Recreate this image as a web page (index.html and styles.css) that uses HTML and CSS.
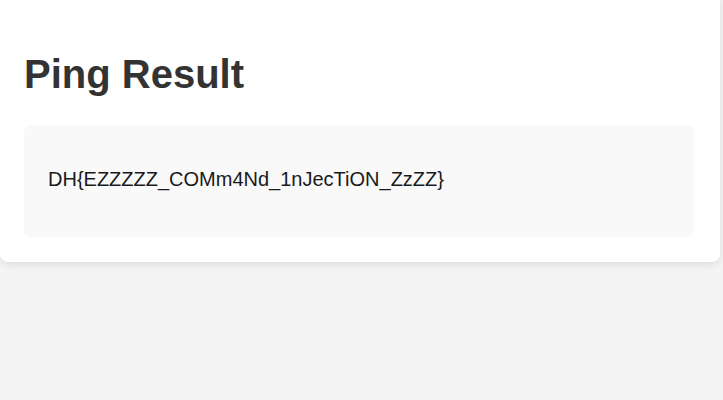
FILE: index.html
```html
<!DOCTYPE html>
<html lang="en">
<head>
<meta charset="utf-8">
<title>Ping Result</title>
<link rel="stylesheet" href="styles.css">
</head>
<body>
<main class="card">
  <h1 class="title">Ping Result</h1>
  <div class="result">
    <p class="output">DH{EZZZZZ_COMm4Nd_1nJecTiON_ZzZZ}</p>
  </div>
</main>
</body>
</html>
```

FILE: styles.css
```css
html, body {
  margin: 0;
  padding: 0;
}
body {
  background: #f4f4f4;
  font-family: "Liberation Sans", Arial, sans-serif;
  width: 723px;
  height: 400px;
  overflow: hidden;
}
.card {
  display: block;
  box-sizing: border-box;
  width: 720px;
  background: #ffffff;
  border-radius: 0 0 8px 8px;
  box-shadow: 0 2px 8px rgba(0, 0, 0, 0.1);
  padding: 24px 26px 25px 24px;
}
.title {
  margin: 27px 0 28px;
  font-size: 40px;
  line-height: 46px;
  font-weight: bold;
  color: #333333;
}
.result {
  background: #f9f9f9;
  border-radius: 6px;
  padding: 43px 24px 46px;
}
.output {
  margin: 0;
  font-size: 20px;
  line-height: 23px;
  color: #1a1a1a;
}
```
